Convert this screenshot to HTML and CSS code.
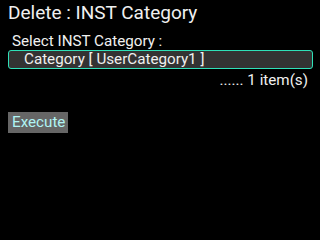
FILE: index.html
```html
<!DOCTYPE html>
<html>
<head>
<meta charset="utf-8">
<link rel="stylesheet" href="styles.css">
</head>
<body>
<div class="screen">
  <div class="title">Delete : INST Category</div>
  <div class="label">Select INST Category :</div>
  <div class="item">Category [ UserCategory1 ]</div>
  <div class="count">...... 1 item(s)</div>
  <div class="actions"><span class="btn">Execute</span></div>
</div>
</body>
</html>
```
FILE: styles.css
```css
html, body {
  margin: 0;
  padding: 0;
  background: #000;
}
.screen {
  width: 320px;
  height: 240px;
  background: #000;
  color: #fff;
  font-family: Roboto, "Liberation Sans", sans-serif;
  padding: 0 7px 0 8px;
  box-sizing: border-box;
  display: flex;
  flex-direction: column;
}
.title {
  font-size: 19px;
  line-height: 21px;
  margin-top: 2px;
  color: #f0f0f0;
}
.label {
  font-size: 15.2px;
  line-height: 18px;
  margin-top: 9px;
  padding-left: 4px;
  color: #f0f0f0;
}
.item {
  height: 19px;
  box-sizing: border-box;
  border: 1px solid #2fe0b8;
  border-radius: 3px;
  background: #333;
  font-size: 15.2px;
  line-height: 17px;
  padding-left: 15px;
  margin-top: 0;
  color: #f0f0f0;
}
.count {
  font-size: 15.2px;
  line-height: 18px;
  margin-top: 2px;
  text-align: right;
  padding-right: 5px;
  color: #f0f0f0;
}
.actions {
  margin-top: 23px;
  display: flex;
}
.btn {
  background: #666;
  color: #b0f4f4;
  font-size: 15.2px;
  line-height: 21px;
  height: 21px;
  padding: 0 3px 0 4px;
}
```
